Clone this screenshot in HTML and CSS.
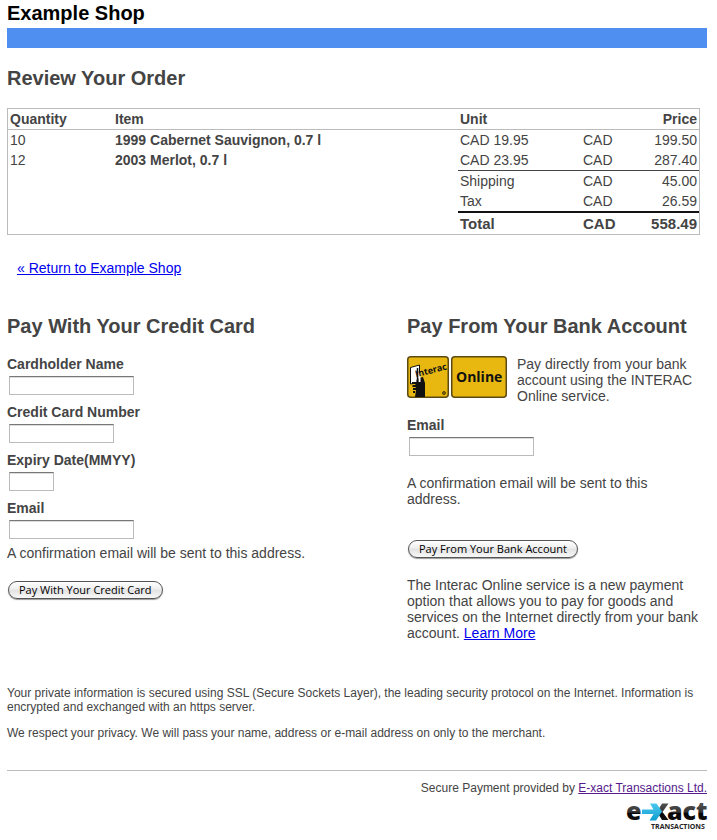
FILE: index.html
```html
<!DOCTYPE html>
<html lang="en">
<head>
<meta charset="utf-8">
<meta name="viewport" content="width=device-width, initial-scale=1">
<title>Example Shop</title>
<link rel="stylesheet" href="styles.css">
</head>
<body>
<header>
  <h1 class="shop">Example Shop</h1>
  <div class="bar"></div>
</header>
<main>
  <h2>Review Your Order</h2>
  <table class="order">
    <colgroup>
      <col class="c-qty"><col class="c-item"><col class="c-unit"><col class="c-cur"><col class="c-price">
    </colgroup>
    <thead>
      <tr><th>Quantity</th><th>Item</th><th>Unit</th><th></th><th class="num">Price</th></tr>
    </thead>
    <tbody>
      <tr><td>10</td><td class="name">1999 Cabernet Sauvignon, 0.7 l</td><td>CAD 19.95</td><td>CAD</td><td class="num">199.50</td></tr>
      <tr><td>12</td><td class="name">2003 Merlot, 0.7 l</td><td>CAD 23.95</td><td>CAD</td><td class="num">287.40</td></tr>
      <tr class="sub"><td colspan="2"></td><td>Shipping</td><td>CAD</td><td class="num">45.00</td></tr>
      <tr><td colspan="2"></td><td>Tax</td><td>CAD</td><td class="num">26.59</td></tr>
      <tr class="total"><td colspan="2"></td><td>Total</td><td>CAD</td><td class="num">558.49</td></tr>
    </tbody>
  </table>
  <p class="return"><a href="#">« Return to Example Shop</a></p>

  <div class="methods">
    <form class="card">
      <h2>Pay With Your Credit Card</h2>
      <div class="field"><label for="holder">Cardholder Name</label><input id="holder" class="w-long" type="text"></div>
      <div class="field"><label for="number">Credit Card Number</label><input id="number" class="w-mid" type="text"></div>
      <div class="field"><label for="expiry">Expiry Date(MMYY)</label><input id="expiry" class="w-short" type="text"></div>
      <div class="field"><label for="email">Email</label><input id="email" class="w-long" type="text"></div>
      <p class="note">A confirmation email will be sent to this address.</p>
      <button type="button">Pay With Your Credit Card</button>
    </form>

    <form class="bank">
      <h2>Pay From Your Bank Account</h2>
      <div class="interac">
        <svg width="100" height="42" viewBox="0 0 100 42" role="img" aria-label="Interac Online">
          <rect x=".75" y=".75" width="40.5" height="40.5" rx="3" fill="#e8b810" stroke="#5d4a10" stroke-width="1.5"/>
          <rect x="44.75" y=".75" width="54.5" height="40.5" rx="3" fill="#e8b810" stroke="#5d4a10" stroke-width="1.5"/>
          <path d="M3.500 11.500l9-2.500v16l-3 2-6 1z" fill="#fff" stroke="#111" stroke-width="1"/>
          <path d="M8 25l4-3 4-1 2 6v14H8l1-7z" fill="#111"/>
          <path d="M8.500 14v12M12.500 17v9" stroke="#fff" stroke-width="2"/>
          <path d="M10.500 12v14" stroke="#111" stroke-width="1.500"/>
          <path d="M5 27h5M5.500 30h4M6 33h3M6 36h2" stroke="#111" stroke-width="2"/>
          <g transform="rotate(-14 10 21)"><text class="t-interac" x="9" y="21">Interac</text></g>
          <circle cx="37" cy="37" r="1.5" fill="#8a6c10" stroke="#3a2f0c" stroke-width=".8"/>
          <text class="t-online" x="49" y="26">Online</text>
        </svg>
        <p>Pay directly from your bank account using the INTERAC Online service.</p>
      </div>
      <div class="field"><label for="bank-email">Email</label><input id="bank-email" class="w-long" type="text"></div>
      <p class="bank-note">A confirmation email will be sent to this address.</p>
      <button type="button">Pay From Your Bank Account</button>
      <p class="about">The Interac Online service is a new payment option that allows you to pay for goods and services on the Internet directly from your bank account. <a href="#">Learn More</a></p>
    </form>
  </div>
</main>
<footer>
  <p>Your private information is secured using SSL (Secure Sockets Layer), the leading security protocol on the Internet. Information is encrypted and exchanged with an https server.</p>
  <p>We respect your privacy. We will pass your name, address or e-mail address on only to the merchant.</p>
  <div class="provider">
    <p>Secure Payment provided by <a href="#">E-xact Transactions Ltd.</a></p>
    <svg width="82" height="31" viewBox="0 0 82 31" role="img" aria-label="E-xact Transactions">
      <defs>
        <linearGradient id="ink" gradientUnits="userSpaceOnUse" x1="0" y1="3" x2="0" y2="22"><stop offset="0" stop-color="#555"/><stop offset=".55" stop-color="#333"/><stop offset=".56" stop-color="#050505"/><stop offset="1" stop-color="#111"/></linearGradient>
        <linearGradient id="sky" x1="0" y1="0" x2="0" y2="1"><stop offset="0" stop-color="#4cc8ee"/><stop offset="1" stop-color="#0d9ed0"/></linearGradient>
      </defs>
      <text class="t-exact" x="1" y="21" fill="url(#ink)">e</text>
      <text class="t-exact" x="42" y="21" fill="url(#ink)">act</text>
      <path d="M37 4.500h6.500l-6 8.500 6 8h-6.500l-5-8z" fill="url(#ink)"/>
      <path d="M17 10.500h11.500l-3.500-6h6.500l5.500 8-6 9h-6.500l4-6.500H17z" fill="url(#sky)"/>
      <text class="t-trans" x="26" y="30">TRANSACTIONS</text>
    </svg>
  </div>
</footer>
</body>
</html>
```
FILE: styles.css
```css
* { box-sizing: border-box; }
body {
  margin: 0;
  padding: 1px 10px 8px 7px;
  background: #fff;
  color: #444;
  font: 14px/16px "Liberation Sans", Arial, sans-serif;
}
h1, h2, p { margin: 0; }
h1, h2 { font-size: 20px; line-height: 24px; font-weight: bold; }
a { color: #00e; }
.shop { color: #000; }
.bar { height: 20px; margin-top: 3px; background: #4f8fef; }
main > h2 { margin: 18px 0; }

.order {
  width: 99%;
  table-layout: fixed;
  border-collapse: separate;
  border-spacing: 0;
  border: 1px solid #bbb;
}
.c-qty { width: 105px; }
.c-unit { width: 123px; }
.c-cur { width: 48px; }
.c-price { width: 70px; }
.order th, .order td { padding: 2px; text-align: left; height: 20px; }
.order th { border-bottom: 1px solid #bbb; }
.order .num { text-align: right; }
.name, .total { font-weight: bold; }
.sub td:not(:first-child) { border-top: 1px solid #444; }
.order .total td { height: 23px; }
.total td:not(:first-child) { border-top: 2px solid #111; }
.total { font-size: 15px; }

.return { margin: 25px 10px 38px; }
.methods { display: grid; grid-template-columns: 4fr 3fr; }
.methods h2 { margin-bottom: 18px; }
.field { margin-bottom: 9px; }
label { display: block; font-weight: bold; margin-bottom: 4px; }
input {
  display: block;
  height: 19px;
  margin: 0 2px;
  padding: 1px 3px;
  background: #fff;
  border: 1px solid #bbb;
  border-top-color: #777;
  border-radius: 0;
  box-shadow: inset 0 1px 0 #ddd;
}
.w-long { width: 125px; }
.w-mid { width: 105px; }
.w-short { width: 45px; }
.card .note { margin: -3px 0 20px; }
button {
  display: block;
  height: 18px;
  margin: 0 1px;
  padding: 0 10px;
  border: 1px solid #555;
  border-radius: 9px;
  background: linear-gradient(#fff, #eee 45%, #e2e2e2 50%, #f8f8f8);
  box-shadow: 0 1px 1px #999;
  color: #000;
  font: 11px/16px "Open Sans", sans-serif;
}
.interac { display: flex; gap: 10px; margin-bottom: 13px; }
.interac svg { flex: none; }
.bank-note { margin: 19px 0 33px; padding-right: 20px; }
.about { margin-top: 19px; }

footer { margin-top: 45px; font-size: 12px; line-height: 14px; }
footer p { margin-bottom: 12px; }
.provider {
  display: flex;
  flex-direction: column;
  align-items: flex-end;
  margin-top: 30px;
  padding-top: 10px;
  border-top: 1px solid #bbb;
}
.provider p { margin-bottom: 4px; }
.provider a { color: #551a8b; }
svg { overflow: visible; }
.t-interac { font: bold 9px "Open Sans", sans-serif; fill: #111; }
.t-online { font: bold 14px "Open Sans", sans-serif; fill: #111; }
.t-exact { font: 800 25px "Open Sans", sans-serif; }
.t-trans { font: bold 7px "Open Sans", sans-serif; fill: #222; }
```
